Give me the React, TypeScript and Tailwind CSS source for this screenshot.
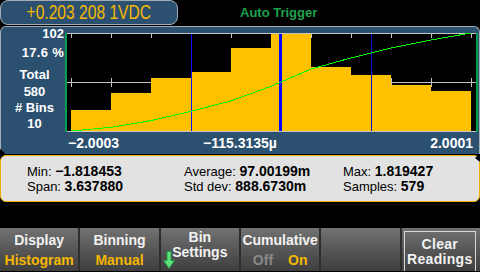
import React from 'react';

// bar tops, in px from the top of the plot (98px = 102 counts)
const barTops = [77, 59.7, 44.7, 38.7, 14.7, 0, 34, 42, 52, 58];

function cumulativePoints() {
  const heights = barTops.map((t) => 98 - t);
  const total = heights.reduce((a, b) => a + b, 0);
  let run = 0;
  const pts = [`6,98`];
  heights.forEach((h, i) => {
    run += h;
    pts.push(`${6 + 40 * (i + 1)},${(98 - (98 * run) / total).toFixed(1)}`);
  });
  return pts.join(' ');
}

function Histogram() {
  const ticks = Array.from({ length: 11 }, (_, i) => 6.5 + 40 * i);
  return (
    <svg width="413" height="99" viewBox="0 0 413 99" shapeRendering="crispEdges" className="block">
      <rect x="0" y="0" width="413" height="99" fill="#000" />
      {/* grid */}
      <line x1="2" y1="0.5" x2="411" y2="0.5" stroke="#c4c4c4" />
      <line x1="2" y1="98.5" x2="411" y2="98.5" stroke="#c4c4c4" />
      <line x1="2" y1="49.5" x2="411" y2="49.5" stroke="#c4c4c4" />
      {ticks.map((x) => (
        <g key={x}>
          <line x1={x} y1="0" x2={x} y2="5" stroke="#c4c4c4" />
          <line x1={x} y1="45" x2={x} y2="54" stroke="#c4c4c4" />
        </g>
      ))}
      {barTops.map((t, i) => (
        <rect key={i} x={6 + 40 * i} y={Math.max(t, 1)} width="40" height={98 - Math.max(t, 1)} fill="#ffc000" />
      ))}
      {/* sigma and mean markers */}
      <rect x="126" y="1" width="1" height="97" fill="#1010ff" />
      <rect x="214" y="1" width="3" height="97" fill="#0000ff" />
      <rect x="306" y="1" width="1" height="97" fill="#0a0ad0" />
      <polyline points={cumulativePoints()} fill="none" stroke="#00ff00" strokeWidth="1" />
      {/* side rails */}
      <rect x="0" y="0" width="2" height="99" fill="#00a050" />
      <rect x="411" y="0" width="2" height="99" fill="#00a050" />
    </svg>
  );
}

function DownArrow() {
  return (
    <svg width="12" height="18" viewBox="0 0 12 18" className="absolute left-[2px] bottom-[2px]">
      <path d="M4 0.5 H8 V9.5 H11.5 L6 17.5 L0.5 9.5 H4 Z" fill="#5ee07a" stroke="#1f9a45" strokeWidth="1" />
    </svg>
  );
}

function SoftKey({ children, className = '' }: { children?: React.ReactNode; className?: string }) {
  return (
    <div className={`relative flex flex-col items-center bg-linear-to-b from-[#727272] to-[#3e3e3e] font-bold text-[14px] ${className}`}>
      {children}
    </div>
  );
}

export default function App() {
  return (
    <div className="w-[480px] h-[272px] bg-black overflow-hidden flex flex-col font-['Liberation_Sans',Arial,sans-serif]">
      {/* readout header */}
      <div className="h-[25px] flex items-center shrink-0">
        <div className="w-[178px] h-[25px] rounded-[8px] border border-[#a4acb4] bg-[#2c5070] flex items-center justify-center text-[#f5b800] text-[19.5px] leading-none">
          <span className="inline-block whitespace-nowrap scale-x-[0.8]">+0.203 208 1VDC</span>
        </div>
        <div className="ml-[62px] text-[13px] font-bold text-[#1ea04c] leading-none">Auto Trigger</div>
      </div>

      {/* histogram panel */}
      <div className="relative mt-[1px] h-[128px] shrink-0 rounded-t-[6px] border-t border-x border-[#a4acb4] bg-[#2c5070] flex flex-col">
        <div className="flex pt-[6px]">
          <div className="w-[64px] -mt-[6px] flex flex-col text-white font-bold text-[13px]">
            <div className="h-[14px] leading-[14px] text-right pr-[1px]">102</div>
            <div className="mt-[4px] h-[16px] leading-[16px] text-right pr-[1px] tracking-[0.3px]">17.6 %</div>
            <div className="mt-[6px] h-[16px] leading-[16px] text-center pl-[3px]">Total</div>
            <div className="mt-[1px] h-[16px] leading-[16px] text-center pl-[3px]">580</div>
            <div className="h-[16px] leading-[16px] text-center pl-[3px]"># Bins</div>
            <div className="h-[16px] leading-[16px] text-center pl-[3px]">10</div>
          </div>
          <Histogram />
        </div>
        <div className="-mx-[1px] h-[21px] grid grid-cols-[1fr_auto_1fr] items-center text-white font-bold text-[14px] leading-none">
          <span className="pl-[68px]">−2.0003</span>
          <span>−115.3135µ</span>
          <span className="text-right pr-[7px]">2.0001</span>
        </div>
        <div className="absolute -left-[1px] bottom-[-3px] w-0 h-0 border-y-[4px] border-y-transparent border-l-[5px] border-l-black" />
      </div>

      {/* statistics */}
      <div className="relative mt-[1px] h-[47px] shrink-0 rounded-[6px] border border-[#f0b000] bg-[#e2e2e2] grid grid-cols-[157px_159px_1fr] content-center pl-[26px] text-black leading-[15px]">
        <div className="flex flex-col">
          <div className="text-[13px]">Min: <b className="text-[14px]">−1.818453</b></div>
          <div className="text-[13px]">Span: <b className="text-[14px]">3.637880</b></div>
        </div>
        <div className="flex flex-col">
          <div className="text-[13px]">Average: <b className="text-[14px]">97.00199m</b></div>
          <div className="text-[13px]">Std dev: <b className="text-[14px]">888.6730m</b></div>
        </div>
        <div className="flex flex-col">
          <div className="text-[13px]">Max: <b className="text-[14px]">1.819427</b></div>
          <div className="text-[13px]">Samples: <b className="text-[14px]">579</b></div>
        </div>
        <div className="absolute -right-[1px] top-[-2px] w-0 h-0 border-y-[4px] border-y-transparent border-r-[5px] border-r-black" />
      </div>

      {/* softkeys */}
      <div className="mt-[26px] h-[43px] shrink-0 grid grid-cols-6 gap-[2px] bg-[#2e2e2e]">
        <SoftKey className="pt-[2px] leading-[20px]">
          <span className="text-[#f2f2f2]">Display</span>
          <span className="text-[#f5b800]">Histogram</span>
        </SoftKey>
        <SoftKey className="pt-[2px] leading-[20px]">
          <span className="text-[#f2f2f2]">Binning</span>
          <span className="text-[#f5b800]">Manual</span>
        </SoftKey>
        <SoftKey className="pt-[2px] leading-[15px] text-[#f2f2f2]">
          <span>Bin</span>
          <span>Settings</span>
          <DownArrow />
        </SoftKey>
        <SoftKey className="pt-[2px] leading-[20px]">
          <span className="text-[#f2f2f2]">Cumulative</span>
          <div className="flex gap-[15px]">
            <span className="text-[#8a8a8a]">Off</span>
            <span className="text-[#f5b800]">On</span>
          </div>
        </SoftKey>
        <SoftKey />
        <SoftKey>
          <div className="mt-[3px] ml-[2px] mr-[4px] self-stretch flex-1 border border-b-0 border-[#d8d8d8] flex flex-col items-center pt-[5px] leading-[15px] text-[14px] tracking-[0.3px] text-[#f2f2f2]">
            <span>Clear</span>
            <span>Readings</span>
          </div>
        </SoftKey>
      </div>
    </div>
  );
}
